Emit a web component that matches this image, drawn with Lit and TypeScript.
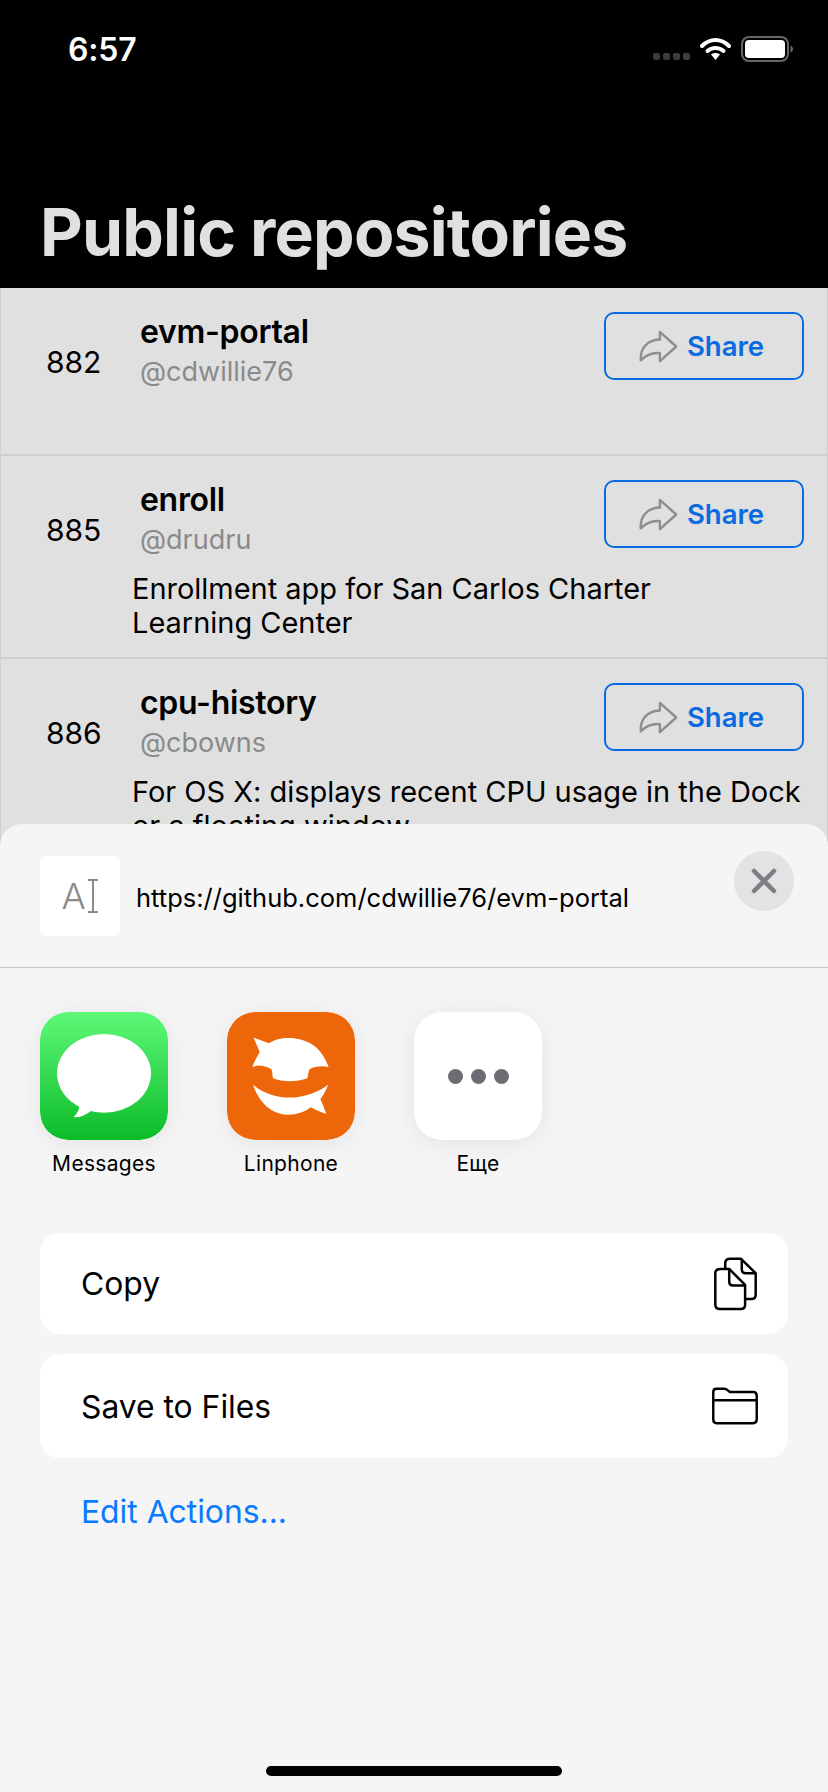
import { LitElement, html, css } from "lit";
import { customElement } from "lit/decorators.js";

const shareIcon = html`<svg class="share-ico" viewBox="172 118 118 100"><path d="M180 208C178 175 195 150 235 148L235 126L282 168L235 210L235 187C212 185 195 192 180 208Z" fill="none" stroke="#8e8e8e" stroke-width="7" stroke-linejoin="round"/></svg>`;

const repos = [
  { n: 882, name: "evm-portal", user: "@cdwillie76", desc: [] as string[] },
  { n: 885, name: "enroll", user: "@drudru", desc: ["Enrollment app for San Carlos Charter", "Learning Center"] },
  { n: 886, name: "cpu-history", user: "@cbowns", desc: ["For OS X: displays recent CPU usage in the Dock", "or a floating window"] },
];

@customElement("app-root")
export class AppRoot extends LitElement {
  static styles = css`
    :host {
      display: block;
      position: relative;
      height: 1792px;
      overflow: hidden;
      background: #e0e0e0;
      font-family: Inter, "Noto Sans", sans-serif;
      color: #000;
    }
    .top { background: #000; height: 288px; display: flex; flex-direction: column; }
    .status { display: flex; align-items: center; height: 98px; padding: 0 35px 0 68px; }
    .time { color: #fff; font-size: 32px; font-weight: 600; flex: 1; letter-spacing: -0.2px; }
    .sig { display: flex; gap: 3px; margin: 14px 10px 0 0; }
    .sig i { width: 7px; height: 7px; background: #3c3c3c; border-radius: 2px; display: block; }
    .wifi { width: 31px; height: 24px; margin-right: 10px; }
    .batt { width: 52px; height: 26px; }
    h1 { margin: 98px 0 0 40px; color: #e0e0e0; font-size: 66px; line-height: 72px; font-weight: 700; letter-spacing: -0.8px; white-space: nowrap; }
    .row { box-sizing: border-box; background: #e0e0e0; border: 1px solid #cfcfcf; border-top: 0; border-bottom: 2px solid #cfcfcf; padding: 24px 23px 17px 0; }
    .row.first { min-height: 168px; }
    .head { display: flex; height: 92px; }
    .num { width: 139px; box-sizing: border-box; padding-left: 45px; margin-top: 30px; font-size: 30px; line-height: 40px; }
    .info { flex: 1; }
    .name { font-size: 32px; font-weight: 600; line-height: 39px; letter-spacing: -0.3px; }
    .user { font-size: 27px; line-height: 41px; color: #8a8a8a; }
    .btn { box-sizing: border-box; width: 200px; height: 68px; padding-right: 6px; border: 2px solid #0a6ae0; border-radius: 10px; display: flex; align-items: center; justify-content: center; gap: 8px; color: #0a6ae0; font-size: 27.500px; font-weight: 600; }
    .share-ico { width: 41px; height: 35px; }
    .desc { padding-left: 131px; font-size: 29px; line-height: 34px; white-space: nowrap; letter-spacing: -0.02px; }
    .sheet { position: absolute; left: 0; right: 0; top: 824px; bottom: 0; background: #f5f5f6; border-radius: 22px 22px 0 0; display: flex; flex-direction: column; }
    .shead { height: 144px; box-sizing: border-box; border-bottom: 1px solid #c6c6c8; display: flex; padding: 32px 34px 0 40px; flex: none; }
    .thumb { width: 80px; height: 80px; background: #fff; border-radius: 6px; display: flex; align-items: center; justify-content: center; gap: 1px; color: #8a8a8a; font-size: 36px; font-weight: 300; }
    .url { flex: 1; margin: 22px 0 0 16px; font-size: 25.500px; line-height: 40px; }
    .close { width: 60px; height: 60px; border-radius: 50%; background: #e3e3e5; margin-top: -5px; display: flex; align-items: center; justify-content: center; }
    .apps { display: flex; gap: 59px; padding: 44px 40px 0; flex: none; }
    .app { width: 128px; display: flex; flex-direction: column; align-items: center; white-space: nowrap; font-size: 21px; line-height: 26px; letter-spacing: .3px; }
    .ico { width: 128px; height: 128px; border-radius: 28px; box-shadow: 0 4px 24px rgba(0,0,0,.07); margin-bottom: 11px; display: block; }
    .more { background: #fff; display: flex; align-items: center; justify-content: center; gap: 8px; }
    .more i { width: 15px; height: 15px; border-radius: 50%; background: #6c6c74; display: block; }
    .card { margin: 0 40px; background: #fff; border-radius: 20px; display: flex; align-items: center; justify-content: space-between; padding: 0 29px 0 41px; font-size: 31.800px; flex: none; }
    .copy { height: 101px; margin-top: 56px; }
    .save { height: 104px; margin-top: 20px; }
    .edit { margin: 32px 0 0 81px; font-size: 31.800px; line-height: 44px; color: #0a7aff; }
    .home { position: absolute; left: 266px; width: 296px; bottom: 16px; height: 10px; border-radius: 5px; background: #000; }
  `;

  render() {
    return html`
      <div class="top">
        <div class="status">
          <span class="time">6:57</span>
          <span class="sig"><i></i><i></i><i></i><i></i></span>
          <svg class="wifi" viewBox="0 0 31 24">
            <path d="M2 9C10 1 21 1 29 9" fill="none" stroke="#fff" stroke-width="4" stroke-linecap="round"/>
            <path d="M7.500 14C12 10 19 10 23.500 14" fill="none" stroke="#fff" stroke-width="4" stroke-linecap="round"/>
            <path d="M11 17.500C13.500 15.500 17.500 15.500 20 17.500L15.500 23Z" fill="#fff"/>
          </svg>
          <svg class="batt" viewBox="0 0 52 26">
            <rect x="1" y="1" width="46" height="24" rx="7" fill="none" stroke="#666" stroke-width="2"/>
            <rect x="4" y="4" width="40" height="18" rx="4" fill="#fff"/>
            <path d="M49.500 9.500C51 10 52 11.500 52 13S51 16 49.500 16.500Z" fill="#666"/>
          </svg>
        </div>
        <h1>Public repositories</h1>
      </div>
      ${repos.map(
        (r, i) => html`
          <div class="row ${i === 0 ? "first" : ""}">
            <div class="head">
              <div class="num">${r.n}</div>
              <div class="info">
                <div class="name">${r.name}</div>
                <div class="user">${r.user}</div>
              </div>
              <div class="btn">${shareIcon}<span>Share</span></div>
            </div>
            ${r.desc.map((d) => html`<div class="desc">${d}</div>`)}
          </div>
        `
      )}
      <div class="sheet">
        <div class="shead">
          <div class="thumb">
            <span>A</span>
            <svg width="12" height="34" viewBox="0 0 12 34"><path d="M1 1H11M1 33H11M6 1V33" stroke="#8a8a8a" stroke-width="2" fill="none"/></svg>
          </div>
          <div class="url">https://github.com/cdwillie76/evm-portal</div>
          <div class="close">
            <svg width="26" height="26" viewBox="0 0 26 26"><path d="M3 3L23 23M23 3L3 23" stroke="#7d7d82" stroke-width="4.500" stroke-linecap="round"/></svg>
          </div>
        </div>
        <div class="apps">
          <div class="app">
            <svg class="ico" viewBox="60 66 384 384">
              <defs><linearGradient id="g" x1="0" y1="0" x2="0" y2="1"><stop offset="0" stop-color="#5ef878"/><stop offset="1" stop-color="#0bbc28"/></linearGradient></defs>
              <rect x="60" y="66" width="384" height="384" rx="84" fill="url(#g)"/>
              <ellipse cx="252" cy="250" rx="141" ry="118" fill="#fff"/>
              <path d="M178 345C178 360 170 374 160 381C180 384 198 374 214 362Z" fill="#fff"/>
            </svg>
            <span>Messages</span>
          </div>
          <div class="app">
            <svg class="ico" viewBox="82 66 384 384">
              <rect x="82" y="66" width="384" height="384" rx="84" fill="#ed660a"/>
              <path d="M162 143C175 147 195 155 208 160C240 138 300 138 340 165C362 180 378 205 387 232C370 226 345 230 330 237C326 245 325 258 323 265C290 277 250 277 220 265C218 255 218 245 215 237C195 228 175 222 158 232C163 215 172 200 180 187C175 172 168 158 162 143Z" fill="#fff"/>
              <path d="M160 284C200 320 260 328 300 320C330 315 365 300 385 284C380 300 370 318 362 327C368 340 375 358 380 372C365 368 345 358 333 352C300 378 250 382 215 360C190 345 170 315 160 284Z" fill="#fff"/>
            </svg>
            <span>Linphone</span>
          </div>
          <div class="app">
            <div class="ico more"><i></i><i></i><i></i></div>
            <span>Еще</span>
          </div>
        </div>
        <div class="card copy">
          <span>Copy</span>
          <svg width="48" height="58" viewBox="150 75 145 175" fill="none" stroke="#000" stroke-width="7.500" stroke-linejoin="round">
            <path d="M178 117H205L253 165V225Q253 238 240 238H178Q163 238 163 225V130Q163 117 178 117Z"/>
            <path d="M205 117V155Q205 167 217 167H253"/>
            <path d="M193 117V100Q193 86 208 86H240L285 130V195Q285 208 272 208H255"/>
            <path d="M243 88V118Q243 130 255 130H285"/>
          </svg>
        </div>
        <div class="card save">
          <span>Save to Files</span>
          <svg width="48" height="40" viewBox="150 468 148 120" fill="none" stroke="#000" stroke-width="7.500" stroke-linejoin="round">
            <path d="M157 485Q157 475 167 475H190Q197 475 202 480L208 485H280Q291 485 291 496V570Q291 581 280 581H167Q157 581 157 570Z"/>
            <path d="M157 510H291"/>
          </svg>
        </div>
        <div class="edit">Edit Actions...</div>
        <div class="home"></div>
      </div>
    `;
  }
}
